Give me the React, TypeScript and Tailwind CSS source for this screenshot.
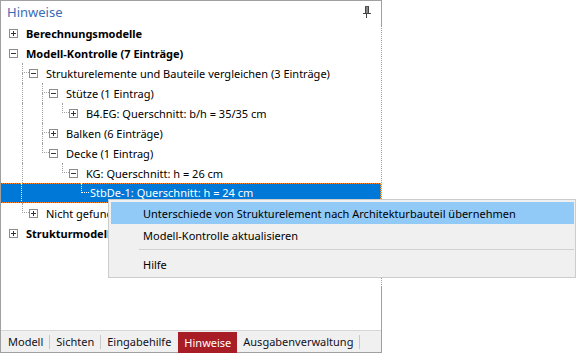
import type { ReactNode } from 'react';

type Guide = 'line' | 'none';

interface Row {
  text: string;
  level: number;
  box?: '+' | '-';
  bold?: boolean;
  guides?: Guide[];
  conn?: 'T' | 'L';
  selected?: boolean;
}

const rows: Row[] = [
  { text: 'Berechnungsmodelle', level: 0, box: '+', bold: true },
  { text: 'Modell-Kontrolle (7 Einträge)', level: 0, box: '-', bold: true },
  { text: 'Strukturelemente und Bauteile vergleichen (3 Einträge)', level: 1, box: '-', guides: [], conn: 'T' },
  { text: 'Stütze (1 Eintrag)', level: 2, box: '-', guides: ['line'], conn: 'T' },
  { text: 'B4.EG: Querschnitt: b/h = 35/35 cm', level: 3, box: '+', guides: ['line', 'line'], conn: 'L' },
  { text: 'Balken (6 Einträge)', level: 2, box: '+', guides: ['line'], conn: 'T' },
  { text: 'Decke (1 Eintrag)', level: 2, box: '-', guides: ['line'], conn: 'L' },
  { text: 'KG: Querschnitt: h = 26 cm', level: 3, box: '-', guides: ['line', 'none'], conn: 'L' },
  { text: 'StbDe-1: Querschnitt: h = 24 cm', level: 4, guides: ['line', 'none', 'none'], conn: 'L', selected: true },
  { text: 'Nicht gefundene Bauteile', level: 1, box: '+', guides: [], conn: 'L' },
  { text: 'Strukturmodelle', level: 0, box: '+', bold: true },
];

function ExpandBox({ sign }: { sign: '+' | '-' }) {
  return (
    <div className="w-[9px] h-[9px] border border-[#8c8c8c] bg-white flex items-center justify-center relative shrink-0">
      <div className="w-[5px] h-px bg-[#333]" />
      {sign === '+' && <div className="absolute w-px h-[5px] bg-[#333]" />}
    </div>
  );
}

function GuideCell({ line, selected }: { line: boolean; selected?: boolean }) {
  const c = selected ? 'border-white' : 'border-[#a0a0a0]';
  return (
    <div className="w-[20px] h-full shrink-0 flex">
      <div className={`ml-[13px] h-full ${line ? `border-l border-dotted ${c}` : ''}`} />
    </div>
  );
}

function ConnCell({ kind, selected, leaf }: { kind: 'T' | 'L'; selected?: boolean; leaf?: boolean }) {
  const c = selected ? 'border-white' : 'border-[#a0a0a0]';
  return (
    <div className={`${leaf ? 'w-[21px]' : 'w-[20px]'} h-full shrink-0 flex`}>
      <div className="ml-[13px] flex-1 flex flex-col">
        <div className={`h-[10px] border-l border-b border-dotted ${c}`} />
        <div className={`flex-1 ${kind === 'T' ? `border-l border-dotted ${c}` : ''}`} />
      </div>
    </div>
  );
}

function TreeRow({ row }: { row: Row }) {
  const cells: ReactNode[] = [];
  (row.guides || []).forEach((g, i) => cells.push(<GuideCell key={i} line={g === 'line'} selected={row.selected} />));
  const inner = (
    <div className="flex items-center h-full pl-[8px]">
      {cells}
      {row.conn && <ConnCell kind={row.conn} selected={row.selected} leaf={!row.box} />}
      {row.box && <ExpandBox sign={row.box} />}
      <span
        className={`${row.box ? 'ml-[8px]' : 'ml-[1px]'} whitespace-nowrap ${row.bold ? 'font-bold' : ''} ${
          row.selected ? 'text-white' : 'text-black'
        }`}
      >
        {row.text}
      </span>
    </div>
  );
  if (row.selected) {
    return (
      <div className="h-[20px] bg-[#0078d7] border border-dotted border-[#ff8a2a] -ml-px">
        <div className="h-full -mt-px -ml-px">{inner}</div>
      </div>
    );
  }
  return <div className="h-[20px]">{inner}</div>;
}

function Pin() {
  return (
    <svg width="10" height="12" viewBox="0 0 10 12" className="mr-[9px]">
      <rect x="3" y="0" width="4" height="1" fill="#555" />
      <rect x="3" y="1" width="1" height="6" fill="#444" />
      <rect x="4" y="1" width="2" height="6" fill="#888" />
      <rect x="6" y="1" width="1" height="6" fill="#444" />
      <rect x="1" y="7" width="8" height="1" fill="#444" />
      <rect x="4" y="8" width="1" height="4" fill="#444" />
    </svg>
  );
}

const tabs = ['Modell', 'Sichten', 'Eingabehilfe', 'Hinweise', 'Ausgabenverwaltung'];

export default function App() {
  return (
    <div className="w-[576px] h-[354px] bg-white relative overflow-hidden text-[11px] leading-none" style={{ fontFamily: '"Noto Sans", "Open Sans", sans-serif' }}>
      <div className="flex h-[353px]">
        <div className="w-[381px] h-full border-l border-t border-b border-[#a0a0a0] flex flex-col">
          <div className="h-[22px] flex items-center justify-between pl-[6px]">
            <span className="text-[13px] text-[#3a6db5]">Hinweise</span>
            <Pin />
          </div>
          <div className="flex-1 overflow-hidden">
            {rows.map((r, i) => (
              <TreeRow key={i} row={r} />
            ))}
          </div>
          <div className="h-[22px] border-t border-[#d6d6d6] bg-[#f0f0f0] flex items-stretch pl-[1px]">
            {tabs.map((t, i) => (
              <div key={t} className="flex items-center">
                <div
                  className={`h-full flex items-center px-[6px] ${
                    t === 'Hinweise' ? 'bg-[#a81c25] text-white mt-px' : 'text-[#101020]'
                  }`}
                >
                  {t}
                </div>
                {t !== 'Eingabehilfe' && t !== 'Hinweise' && <div className="w-px h-[14px] bg-[#c8c8c8]" />}
                {i === 2 && <div className="w-[1px]" />}
              </div>
            ))}
          </div>
        </div>
        <div className="w-px h-full flex flex-col">
          <div className="h-[25px] bg-[#a0a0a0]" />
          <div className="h-[262px] border-l border-dotted border-[#a0a0a0]" />
          <div className="flex-1 bg-[#a0a0a0]" />
        </div>
      </div>

      <div className="absolute left-[108px] top-[199px] w-[468px] h-[79px] bg-[#f0f0f0] border border-[#cccccc] flex flex-col pt-[2px]">
        <div className="h-[22px] ml-[2px] mr-[1px] bg-[#91c9f7] flex items-center pl-[32px] text-black">
          Unterschiede von Strukturelement nach Architekturbauteil übernehmen
        </div>
        <div className="h-[22px] flex items-center pl-[34px] text-black">Modell-Kontrolle aktualisieren</div>
        <div className="h-[7px] flex items-center pl-[30px] pr-[1px]">
          <div className="h-px w-full bg-[#d0d0d0]" />
        </div>
        <div className="h-[22px] flex items-center pl-[34px] text-black">Hilfe</div>
      </div>
    </div>
  );
}
